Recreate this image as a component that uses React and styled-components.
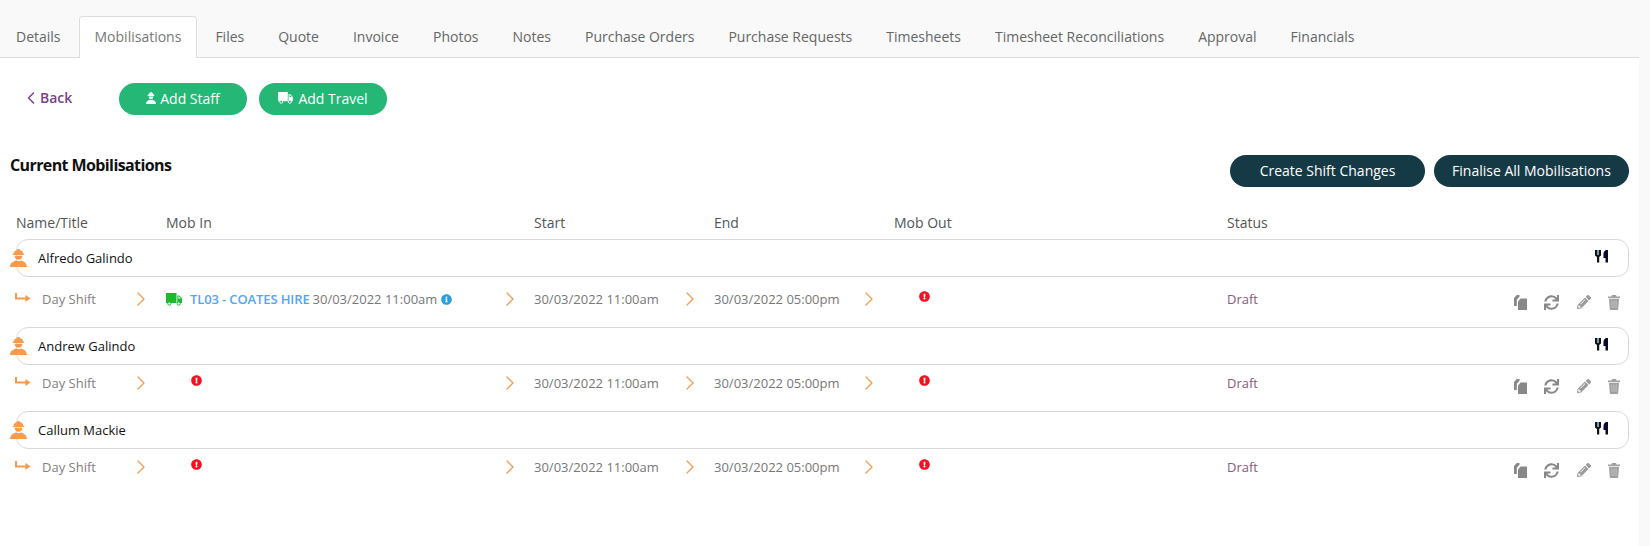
import styled, { createGlobalStyle } from "styled-components";
import { ChevronRight, ChevronLeft } from "lucide-react";
import { FaPencilAlt, FaSync, FaInfoCircle, FaExclamationCircle } from "react-icons/fa";

const TABS = ["Details", "Mobilisations", "Files", "Quote", "Invoice", "Photos", "Notes", "Purchase Orders", "Purchase Requests", "Timesheets", "Timesheet Reconciliations", "Approval", "Financials"];

const PEOPLE = [
  { name: "Alfredo Galindo", mobIn: { code: "TL03 - COATES HIRE", date: "30/03/2022 11:00am" } },
  { name: "Andrew Galindo" },
  { name: "Callum Mackie" },
];

const GlobalStyle = createGlobalStyle`
  html, body { margin: 0; padding: 0; background: #fff; }
  body { font-family: "Open Sans", "Liberation Sans", sans-serif; font-size: 14px; color: #666; }
`;

const Page = styled.div`
  width: 1650px;
  height: 546px;
  display: flex;
  overflow: hidden;
`;
const Main = styled.div`
  width: 1639px;
  flex: none;
`;
const Gutter = styled.div`
  flex: 1;
  background: #f9f9f9;
`;
const TabBar = styled.div`
  height: 58px;
  box-sizing: border-box;
  padding-top: 16px;
  display: flex;
  background: #f9f9f9;
  border-bottom: 1px solid #ddd;
`;
const Tab = styled.div`
  height: 41px;
  box-sizing: border-box;
  padding: 10px 16px 0;
  line-height: 20px;
  color: #666;
  border: 1px solid transparent;
  border-bottom: 0;
  border-radius: 4px 4px 0 0;
  &:first-child { margin-left: -1px; }
  ${(p) => p.$active && "background: #fff; border-color: #ddd; height: 42px; color: #777; margin: 0 1px; padding: 10px 15px 0;"}
`;
const Toolbar = styled.div`
  display: flex;
  align-items: center;
  padding: 25px 0 0 21px;
`;
const Back = styled.div`
  width: 98px;
  display: flex;
  align-items: center;
  gap: -1px;
  color: #7b3f8c;
  font-weight: 600;
  margin-top: -3px;
`;
const BackArrow = styled(ChevronLeft)`
  margin-right: -1px;
`;
const Pill = styled.button`
  height: 32px;
  border: 0;
  border-radius: 16px;
  padding: 0 0 2px;
  display: flex;
  align-items: center;
  justify-content: center;
  font: 14px "Open Sans", sans-serif;
  color: #fff;
  background: ${(p) => p.$dark ? "#163a45" : "#25b775"};
  width: ${(p) => p.$w}px;
  gap: ${(p) => p.$gap || 4}px;
`;
const AddRow = styled.div`
  display: flex;
  gap: 12px;
`;
const TitleRow = styled.div`
  display: flex;
  justify-content: space-between;
  align-items: flex-start;
  padding: 39px 10px 0 10px;
  height: 61px;
`;
const Title = styled.h2`
  margin: 0;
  font-size: 16px;
  font-weight: 700;
  line-height: 22px;
  color: #111;
  letter-spacing: -0.6px;
`;
const ActionPills = styled.div`
  display: flex;
  gap: 9px;
  margin-top: 1px;
`;
const Columns = styled.div`
  display: grid;
  grid-template-columns: 150px 368px 180px 180px 333px 1fr;
  padding-left: 16px;
`;
const HeadRow = styled(Columns)`
  height: 26px;
  line-height: 20px;
  margin-top: -2px;
  color: #555;
`;
const NameBox = styled.div`
  position: relative;
  margin-left: 16px;
  width: 1613px;
  height: 38px;
  box-sizing: border-box;
  border: 1px solid #d8d8d8;
  border-radius: 12px;
  display: flex;
  align-items: center;
  justify-content: space-between;
  padding: 0 19px 0 21px;
  font-size: 13px;
  color: #111;
`;
const WorkerIcon = styled.svg`
  width: ${(p) => p.$w}px;
  height: ${(p) => p.$h}px;
  fill: ${(p) => p.$color};
  flex: none;
`;
const WorkerBadge = styled.span`
  position: absolute;
  left: -7px;
  top: 9px;
  display: flex;
`;
const CutleryIcon = styled.svg`
  margin-bottom: 4px;
`;
const ShiftRow = styled(Columns)`
  height: ${(p) => p.$h}px;
  padding-top: ${(p) => p.$top}px;
  box-sizing: border-box;
  font-size: 13px;
  color: #777;
  align-items: start;
  line-height: 18px;
`;
const Cell = styled.div`
  position: relative;
  display: flex;
  align-items: center;
  white-space: nowrap;
  height: 18px;
`;
const Chevron = styled(ChevronRight)`
  position: absolute;
  left: ${(p) => p.$left}px;
  top: -3px;
  color: #f59a4d;
`;
const ArrowIcon = styled.svg`
  position: absolute;
  left: -1px;
  top: 3px;
`;
const ShiftName = styled.span`
  margin-left: 26px;
  color: #808080;
`;
const Code = styled.span`
  color: #55a5f5;
  font-weight: 600;
  letter-spacing: -0.12px;
  margin: 0 3px 0 8px;
`;
const Draft = styled.span`
  color: #8a5a80;
`;
const Alert = styled(FaExclamationCircle)`
  color: #f5101f;
  font-size: 11px;
  margin-left: ${(p) => p.$left}px;
  margin-top: -6px;
`;
const Info = styled(FaInfoCircle)`
  color: #2b9fdc;
  font-size: 11px;
  margin-left: 4px;
`;
const Actions = styled.div`
  display: flex;
  align-items: center;
  gap: 17.5px;
  margin-left: 256px;
  padding-top: 6px;
  color: #888;
`;

function Worker({ w = 17, h = 18, color = "#fb9a4b" }) {
  return (
    <WorkerIcon viewBox="0 0 16 20" preserveAspectRatio="none" $w={w} $h={h} $color={color}>
      <path d="M6.900 0h2.200v1.200C11.200 1.700 12.500 3.400 12.500 5.300H13.400V6.600H2.600V5.300H3.500C3.500 3.400 4.800 1.700 6.900 1.200z" />
      <path d="M4.300 7.400h7.400C11.500 10.400 10 12 8 12S4.500 10.400 4.300 7.400z" />
      <path d="M0 20C0 16 2.500 14.200 5.500 12.800 7 13.600 9 13.600 10.500 12.800 13.500 14.200 16 16 16 20z" />
    </WorkerIcon>
  );
}

function Truck({ color, w = 16, h = 13, wheel }) {
  return (
    <svg width={w} height={h} viewBox="0 0 16 13" fill={color}>
      <path d="M0 0h10.500v10H0z" />
      <path d="M11.300 2.500h2L16 5.500V10h-4.700zM12.300 3.500V5.500H14.800L13 3.500z" fillRule="evenodd" />
      <circle cx="3.300" cy="10.600" r="1.600" fill={wheel} stroke={color} strokeWidth="1" />
      <circle cx="12.700" cy="10.600" r="1.600" fill={wheel} stroke={color} strokeWidth="1" />
    </svg>
  );
}

function Cutlery() {
  return (
    <CutleryIcon width="14" height="14" viewBox="0 0 14 14">
      <path d="M0 1h6v5.500L4.200 8v5.500H2V8L0 6.500z" fill="#111" />
      <path d="M2.200 1h1.600v5H2.200z" fill="#8cc4ea" />
      <path d="M11.500 1H13v12.500h-2.500V9H8.500V5c0-2 1.500-4 3-4z" fill="#0a0a30" />
    </CutleryIcon>
  );
}

function Copy() {
  return (
    <svg width="13" height="15" viewBox="0 0 13 15" fill="#888">
      <path d="M0 3 2.800 0H5.500V1.800L2.800 4.800V11H0z" />
      <path d="M6.500 3.500H13V15H4V6.500z" />
    </svg>
  );
}

function Trash() {
  return (
    <svg width="12" height="15" viewBox="0 0 12 15" fill="#a0a0a0">
      <path d="M4 0h4l.6 1.500H12V3.200H0V1.500h3.400z" />
      <path d="M1 4h10l-.8 10a1 1 0 0 1-1 1H2.800a1 1 0 0 1-1-1z" />
      <path d="M3.800 5.500l.2 7.500M6 5.500v7.500M8.200 5.500 8 13" stroke="#fff" strokeWidth=".6" opacity=".6" />
    </svg>
  );
}

function ShiftArrow() {
  return (
    <ArrowIcon width="16" height="10" viewBox="0 0 16 10" fill="none">
      <path d="M1 0v5.500h10" stroke="#f59a4d" strokeWidth="2" />
      <path d="M10.500 2 15.500 5.500 10.500 9z" fill="#f59a4d" />
    </ArrowIcon>
  );
}

function Row({ person }) {
  const chev = (left) => <Chevron $left={left} size={24} strokeWidth={1.25} />;
  const info = person.mobIn;
  return (
    <>
      <NameBox>
        <WorkerBadge><Worker /></WorkerBadge>
        <span>{person.name}</span>
        <Cutlery />
      </NameBox>
      <ShiftRow $h={info ? 50 : 46} $top={info ? 13 : 9}>
        <Cell><ShiftArrow /><ShiftName>Day Shift</ShiftName>{chev(113)}</Cell>
        <Cell>
          {info ? (
            <>
              <Truck color="#1cb82e" wheel="#fff" />
              <Code>{info.code}</Code>
              {info.date}
              <Info />
            </>
          ) : (
            <Alert $left={25} />
          )}
          {chev(332)}
        </Cell>
        <Cell>30/03/2022 11:00am{chev(144)}</Cell>
        <Cell>30/03/2022 05:00pm{chev(143)}</Cell>
        <Cell><Alert $left={25} /></Cell>
        <Cell>
          <Draft>Draft</Draft>
          <Actions>
            <Copy />
            <FaSync size={15} />
            <FaPencilAlt size={14} color="#999" />
            <Trash />
          </Actions>
        </Cell>
      </ShiftRow>
    </>
  );
}

export default function App() {
  return (
    <Page>
      <GlobalStyle />
      <Main>
        <TabBar>
          {TABS.map((t) => (
            <Tab key={t} $active={t === "Mobilisations"}>{t}</Tab>
          ))}
        </TabBar>
        <Toolbar>
          <Back><BackArrow size={20} strokeWidth={1.75} />Back</Back>
          <AddRow>
            <Pill $w={128}><Worker w={10} h={12} color="#fff" />Add Staff</Pill>
            <Pill $w={128} $gap={5}><Truck color="#fff" w={15} h={12} wheel="#25b775" />Add Travel</Pill>
          </AddRow>
        </Toolbar>
        <TitleRow>
          <Title>Current Mobilisations</Title>
          <ActionPills>
            <Pill $dark $w={195}>Create Shift Changes</Pill>
            <Pill $dark $w={195}>Finalise All Mobilisations</Pill>
          </ActionPills>
        </TitleRow>
        <HeadRow>
          <div>Name/Title</div>
          <div>Mob In</div>
          <div>Start</div>
          <div>End</div>
          <div>Mob Out</div>
          <div>Status</div>
        </HeadRow>
        {PEOPLE.map((p) => <Row key={p.name} person={p} />)}
      </Main>
      <Gutter />
    </Page>
  );
}
